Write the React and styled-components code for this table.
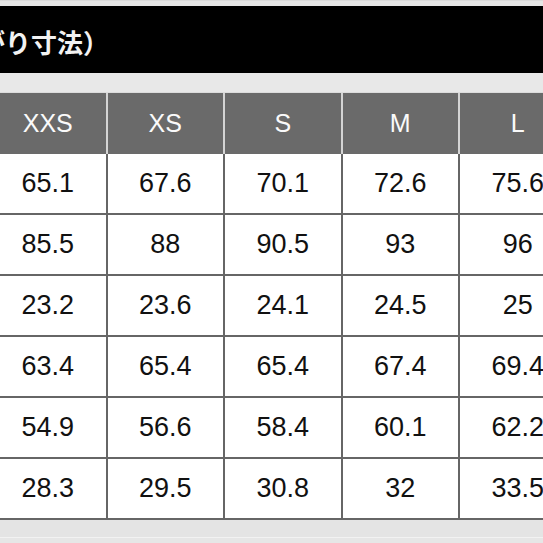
import styled, { createGlobalStyle } from "styled-components";

const GlobalStyle = createGlobalStyle`
  html, body {
    margin: 0;
    padding: 0;
    background: #e6e6e6;
    overflow: hidden;
  }
  body {
    font-family: "Liberation Sans", Arial, sans-serif;
  }
`;

const Page = styled.div`
  width: 543px;
  height: 543px;
  overflow: hidden;
  background: #e6e6e6;
  padding-top: 5px;
  box-sizing: border-box;
  border-top: 1px solid #dadada;
`;

const TitleBar = styled.div`
  height: 67px;
  background: #000;
  display: flex;
  align-items: center;
  overflow: hidden;
`;

const Title = styled.span`
  margin-left: -99px;
  padding-top: 4px;
  color: #f2f2f2;
  font-family: "Noto Sans CJK JP", sans-serif;
  font-weight: 700;
  font-size: 26px;
  white-space: nowrap;
`;

const Spacer = styled.div`
  height: 19px;
  background: #e8e8e8;
  border-bottom: 1px solid #dcdcdc;
`;

const Table = styled.div`
  margin-left: -10px;
  width: 600px;
`;

const HeadRow = styled.div`
  display: grid;
  grid-template-columns: repeat(5, 115.5px);
  column-gap: 2px;
  background: #d4d4d4;
  height: 61px;
`;

const HeadCell = styled.div`
  background: #6a6a6a;
  color: #fafafa;
  font-size: 25px;
  display: flex;
  align-items: center;
  justify-content: center;
`;

const Body = styled.div`
  display: grid;
  grid-template-columns: repeat(5, 115.5px);
  grid-auto-rows: 59px;
  gap: 2px;
  padding-bottom: 2px;
  background: #666;
`;

const Cell = styled.div`
  background: #fff;
  color: #111;
  font-size: 27px;
  display: flex;
  align-items: center;
  justify-content: center;
`;

const Footer = styled.div`
  height: 17px;
  background: #e4e4e4;
  border-bottom: 1px solid #f2f2f2;
`;

const sizes = ["XXS", "XS", "S", "M", "L"];

const rows = [
  ["65.1", "67.6", "70.1", "72.6", "75.6"],
  ["85.5", "88", "90.5", "93", "96"],
  ["23.2", "23.6", "24.1", "24.5", "25"],
  ["63.4", "65.4", "65.4", "67.4", "69.4"],
  ["54.9", "56.6", "58.4", "60.1", "62.2"],
  ["28.3", "29.5", "30.8", "32", "33.5"],
];

const App = () => {
  return (
    <>
      <GlobalStyle />
      <Page>
        <TitleBar>
          <Title>（仕上がり寸法）</Title>
        </TitleBar>
        <Spacer />
        <Table>
          <HeadRow>
            {sizes.map((s) => (
              <HeadCell key={s}>{s}</HeadCell>
            ))}
          </HeadRow>
          <Body>
            {rows.map((row, i) =>
              row.map((v, j) => <Cell key={`${i}-${j}`}>{v}</Cell>)
            )}
          </Body>
        </Table>
        <Footer />
      </Page>
    </>
  );
};

export default App;
